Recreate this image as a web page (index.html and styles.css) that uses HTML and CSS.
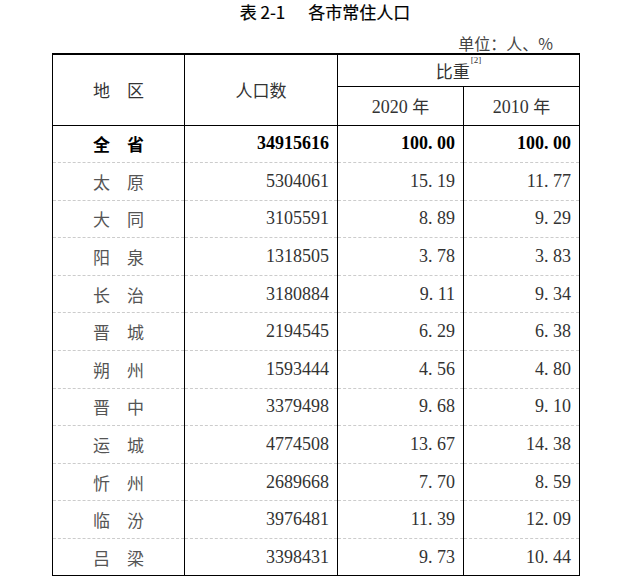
FILE: index.html
```html
<!DOCTYPE html>
<html lang="zh-CN">
<head>
<meta charset="utf-8">
<title>表 2-1 各市常住人口</title>
<link rel="stylesheet" href="styles.css">
</head>
<body>
<div class="page">
  <h1 class="title"><span>表 2-1</span><span class="title-name">各市常住人口</span></h1>
  <div class="unit">单位：人、%</div>
  <table class="data">
    <colgroup>
      <col class="c1"><col class="c2"><col class="c3"><col class="c4">
    </colgroup>
    <thead>
      <tr class="h1">
        <th rowspan="2" class="cn">地　区</th>
        <th rowspan="2" class="cn">人口数</th>
        <th colspan="2" class="cn share">比重<sup>[2]</sup></th>
      </tr>
      <tr class="h2">
        <th class="yr">2020 <span class="cn">年</span></th>
        <th class="yr">2010 <span class="cn">年</span></th>
      </tr>
    </thead>
    <tbody>
      <tr class="total"><td class="region">全　省</td><td class="num">34915616</td><td class="num">100<span class="dot">.</span>00</td><td class="num">100<span class="dot">.</span>00</td></tr>
      <tr><td class="region">太　原</td><td class="num">5304061</td><td class="num">15<span class="dot">.</span>19</td><td class="num">11<span class="dot">.</span>77</td></tr>
      <tr><td class="region">大　同</td><td class="num">3105591</td><td class="num">8<span class="dot">.</span>89</td><td class="num">9<span class="dot">.</span>29</td></tr>
      <tr><td class="region">阳　泉</td><td class="num">1318505</td><td class="num">3<span class="dot">.</span>78</td><td class="num">3<span class="dot">.</span>83</td></tr>
      <tr><td class="region">长　治</td><td class="num">3180884</td><td class="num">9<span class="dot">.</span>11</td><td class="num">9<span class="dot">.</span>34</td></tr>
      <tr><td class="region">晋　城</td><td class="num">2194545</td><td class="num">6<span class="dot">.</span>29</td><td class="num">6<span class="dot">.</span>38</td></tr>
      <tr><td class="region">朔　州</td><td class="num">1593444</td><td class="num">4<span class="dot">.</span>56</td><td class="num">4<span class="dot">.</span>80</td></tr>
      <tr><td class="region">晋　中</td><td class="num">3379498</td><td class="num">9<span class="dot">.</span>68</td><td class="num">9<span class="dot">.</span>10</td></tr>
      <tr><td class="region">运　城</td><td class="num">4774508</td><td class="num">13<span class="dot">.</span>67</td><td class="num">14<span class="dot">.</span>38</td></tr>
      <tr><td class="region">忻　州</td><td class="num">2689668</td><td class="num">7<span class="dot">.</span>70</td><td class="num">8<span class="dot">.</span>59</td></tr>
      <tr><td class="region">临　汾</td><td class="num">3976481</td><td class="num">11<span class="dot">.</span>39</td><td class="num">12<span class="dot">.</span>09</td></tr>
      <tr><td class="region">吕　梁</td><td class="num">3398431</td><td class="num">9<span class="dot">.</span>73</td><td class="num">10<span class="dot">.</span>44</td></tr>
    </tbody>
  </table>
</div>
</body>
</html>
```

FILE: styles.css
```css
html, body {
  margin: 0;
  padding: 0;
  background: #fff;
}

.page {
  width: 635px;
  height: 576px;
  overflow: hidden;
  font-family: "Noto Sans CJK SC", sans-serif;
  color: #333;
}

.title {
  margin: 0;
  height: 24px;
  line-height: 24px;
  font-size: 17px;
  font-weight: normal;
  color: #000;
  display: flex;
  justify-content: center;
  padding-left: 15px;
  -webkit-text-stroke: 0.2px #000;
}

.title-name {
  margin-left: 23px;
}

.unit {
  height: 29px;
  box-sizing: border-box;
  padding-top: 9px;
  padding-right: 82px;
  line-height: 20px;
  font-size: 16px;
  text-align: right;
  color: #444;
}

.data {
  margin-left: 52px;
  width: 527px;
  table-layout: fixed;
  border-collapse: collapse;
  border-top: 2px solid #000;
  border-bottom: 2px solid #000;
  border-left: 1px solid #ccc;
  border-right: 1px solid #ccc;
}

.c1 { width: 132px; }
.c2 { width: 153px; }
.c3 { width: 126px; }
.c4 { width: 116px; }

.data th, .data td {
  padding: 0;
  border-left: 1px solid #000;
  border-right: 1px solid #000;
}

.data th {
  font-weight: normal;
  text-align: center;
  font-size: 17px;
  color: #333;
}

.data thead tr.h1 { height: 32px; }
.data thead tr.h2 { height: 39px; }

.data thead th.share {
  border-bottom: 1px solid #000;
}

.data thead tr.h2 th {
  border-bottom: 1.5px solid #000;
}

.data thead tr.h1 th[rowspan] {
  border-bottom: 1.5px solid #000;
}

.share sup {
  font-family: "Liberation Serif", serif;
  font-size: 9px;
  vertical-align: top;
  position: relative;
  top: -3px;
  margin-left: 1px;
}

.yr {
  font-family: "Liberation Serif", "Noto Sans CJK SC", serif;
  font-size: 18px !important;
}

.yr .cn {
  font-family: "Noto Sans CJK SC", sans-serif;
  font-size: 17px;
}

.data tbody tr {
  height: 37.6px;
}

.data tbody td {
  border-bottom: 1px dashed #ccc;
}

.data tbody tr:last-child td {
  border-bottom: 2px solid #000;
}

.region {
  text-align: center;
  font-size: 17px;
  color: #555;
  font-family: "Noto Sans CJK SC", sans-serif;
}

.num {
  text-align: right;
  padding-right: 8px !important;
  font-family: "Liberation Serif", serif;
  font-size: 18px;
  color: #333;
}

.dot {
  display: inline-block;
  width: 0.5em;
  text-align: left;
}

.total .region {
  color: #000;
  font-weight: bold;
}

.total .num {
  color: #000;
  font-weight: bold;
}
```
